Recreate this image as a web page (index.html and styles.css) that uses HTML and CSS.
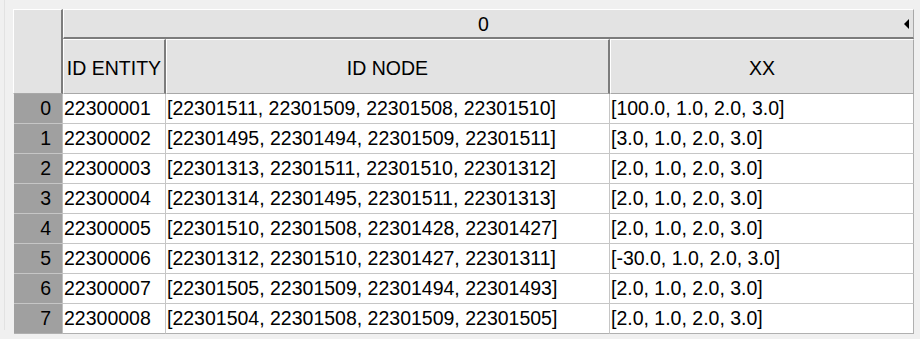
FILE: index.html
```html
<!DOCTYPE html>
<html>
<head>
<meta charset="utf-8">
<link rel="stylesheet" href="styles.css">
</head>
<body>
<div class="frame">
  <div class="sheet">
    <div class="corner"></div>
    <div class="hdr top">
      <span class="hdr-label">0</span>
      <span class="arrow"></span>
    </div>
    <div class="hdr col">ID ENTITY</div>
    <div class="hdr col">ID NODE</div>
    <div class="hdr col last">XX</div>

    <div class="rh">0</div><div class="cell">22300001</div><div class="cell">[22301511, 22301509, 22301508, 22301510]</div><div class="cell end">[100.0, 1.0, 2.0, 3.0]</div>
    <div class="rh">1</div><div class="cell">22300002</div><div class="cell">[22301495, 22301494, 22301509, 22301511]</div><div class="cell end">[3.0, 1.0, 2.0, 3.0]</div>
    <div class="rh">2</div><div class="cell">22300003</div><div class="cell">[22301313, 22301511, 22301510, 22301312]</div><div class="cell end">[2.0, 1.0, 2.0, 3.0]</div>
    <div class="rh">3</div><div class="cell">22300004</div><div class="cell">[22301314, 22301495, 22301511, 22301313]</div><div class="cell end">[2.0, 1.0, 2.0, 3.0]</div>
    <div class="rh">4</div><div class="cell">22300005</div><div class="cell">[22301510, 22301508, 22301428, 22301427]</div><div class="cell end">[2.0, 1.0, 2.0, 3.0]</div>
    <div class="rh">5</div><div class="cell">22300006</div><div class="cell">[22301312, 22301510, 22301427, 22301311]</div><div class="cell end">[-30.0, 1.0, 2.0, 3.0]</div>
    <div class="rh">6</div><div class="cell">22300007</div><div class="cell">[22301505, 22301509, 22301494, 22301493]</div><div class="cell end">[2.0, 1.0, 2.0, 3.0]</div>
    <div class="rh">7</div><div class="cell">22300008</div><div class="cell">[22301504, 22301508, 22301509, 22301505]</div><div class="cell end">[2.0, 1.0, 2.0, 3.0]</div>
  </div>
</div>
</body>
</html>
```

FILE: styles.css
```css
html, body {
  margin: 0;
  padding: 0;
  background: #f0f0f0;
}

body {
  font-family: "Liberation Sans", Arial, sans-serif;
  font-size: 19.5px;
  color: #000;
  width: 920px;
  height: 339px;
  overflow: hidden;
}

.frame {
  margin-left: 4px;
  padding: 9px 0 0 8px;
  border-left: 1px solid #e2e2e2;
  height: 330px;
  box-sizing: border-box;
}

.sheet {
  display: grid;
  grid-template-columns: 50px 103px 444px 304px;
  grid-template-rows: 30px 55px repeat(8, 30px);
  width: 901px;
}

.corner {
  grid-row: 1 / span 2;
  grid-column: 1;
  background: #e3e3e3;
  border-top: 1px solid #fff;
  border-left: 1px solid #fff;
  border-right: 2px solid #7c7c7c;
  border-bottom: 1px solid #a8a8a8;
  box-sizing: border-box;
}

.hdr {
  background: #e3e3e3;
  box-sizing: border-box;
  display: flex;
  align-items: center;
  justify-content: center;
}

.hdr.top {
  grid-column: 2 / span 3;
  border-top: 1px solid #fff;
  border-left: 1px solid #fff;
  border-bottom: 2px solid #7c7c7c;
  border-right: 1px solid #a8a8a8;
  position: relative;
  padding-right: 10px;
  padding-top: 1px;
}

.arrow {
  position: absolute;
  right: 4px;
  top: 9px;
  width: 0;
  height: 0;
  border-top: 5px solid transparent;
  border-bottom: 5px solid transparent;
  border-right: 5px solid #000;
}

.hdr.col {
  border-top: 1px solid #fff;
  border-left: 1px solid #fff;
  border-right: 2px solid #7c7c7c;
  border-bottom: 1px solid #a8a8a8;
  padding-top: 3px;
}

.hdr.col:first-of-type {
  padding-left: 5px;
}

.hdr.col.last {
  border-right: 1px solid #a8a8a8;
}

.rh {
  background: #a0a0a0;
  border-bottom: 1px solid #c6c6c6;
  border-right: 1px solid #c0c0c0;
  margin-left: 1px;
  box-sizing: border-box;
  text-align: right;
  padding-right: 11px;
  line-height: 29px;
}

.cell {
  background: #fff;
  border-bottom: 1px solid #c6c6c6;
  border-right: 1px solid #c6c6c6;
  box-sizing: border-box;
  padding-left: 1px;
  line-height: 28px;
  white-space: nowrap;
  overflow: hidden;
}

.cell.end {
  border-right: 1px solid #b0b0b0;
}

.rh:nth-last-child(4),
.cell:nth-last-child(-n+3) {
  border-bottom-color: #b0b0b0;
}
```
